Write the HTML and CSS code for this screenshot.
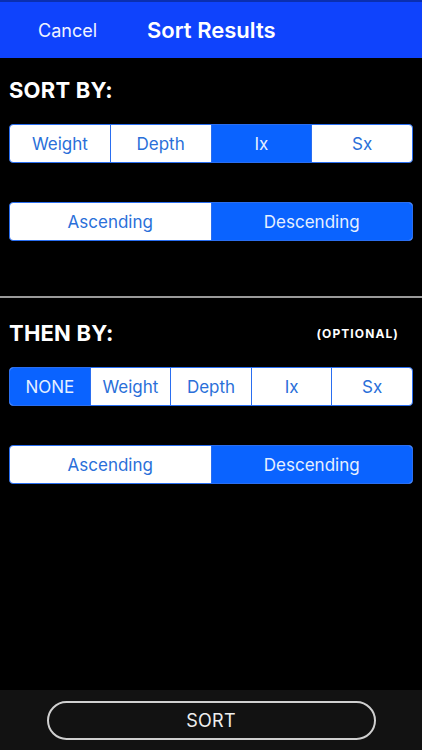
FILE: index.html
```html
<!DOCTYPE html>
<html>
<head>
<meta charset="utf-8">
<link rel="stylesheet" href="styles.css">
</head>
<body>
<div class="app">
  <header class="nav">
    <span class="cancel">Cancel</span>
    <span class="title">Sort Results</span>
  </header>
  <main class="content">
    <section class="block first">
      <h2 class="heading">SORT BY:</h2>
      <div class="seg seg-fields">
        <span class="opt">Weight</span>
        <span class="opt">Depth</span>
        <span class="opt on">Ix</span>
        <span class="opt">Sx</span>
      </div>
      <div class="seg seg-order">
        <span class="opt">Ascending</span>
        <span class="opt on">Descending</span>
      </div>
    </section>
    <hr class="rule">
    <section class="block second">
      <div class="heading-row">
        <h2 class="heading">THEN BY:</h2>
        <span class="optional">(OPTIONAL)</span>
      </div>
      <div class="seg seg-fields">
        <span class="opt on">NONE</span>
        <span class="opt">Weight</span>
        <span class="opt">Depth</span>
        <span class="opt">Ix</span>
        <span class="opt">Sx</span>
      </div>
      <div class="seg seg-order">
        <span class="opt">Ascending</span>
        <span class="opt on">Descending</span>
      </div>
    </section>
  </main>
  <footer class="footer">
    <button class="sort-btn">SORT</button>
  </footer>
</div>
</body>
</html>
```
FILE: styles.css
```css
* { box-sizing: border-box; }
html, body { margin: 0; padding: 0; background: #000; }
body { font-family: Inter, "Noto Sans", "Liberation Sans", sans-serif; }
.app { width: 422px; height: 750px; display: flex; flex-direction: column; }
.nav {
  height: 58px; background: #0f43fc; border-top: 2px solid #0a2fb0;
  display: flex; align-items: center; padding-left: 38px; gap: 50px; color: #fff;
}
.cancel { font-size: 18px; font-weight: 400; color: #f0f4ff; }
.title { font-size: 22px; font-weight: 600; }
.content { flex: 1; display: flex; flex-direction: column; }
.block { padding: 0 9px 0 9px; }
.block.first { padding-top: 19px; }
.heading { margin: 0; color: #fff; font-size: 22px; font-weight: 700; line-height: 26px; letter-spacing: 0.2px; }
.heading-row { display: flex; align-items: center; justify-content: space-between; padding-right: 14px; }
.optional { color: #fff; font-size: 12px; font-weight: 700; letter-spacing: 1.1px; }
.seg {
  display: flex; border: 1px solid #2a6ef0; border-radius: 4px; overflow: hidden;
  background: #fff; height: 39px;
}
.seg .opt {
  flex: 1; display: flex; align-items: center; justify-content: center;
  color: #2a6fd9; font-size: 17px; border-left: 1px solid #2a6ef0;
}
.seg .opt:first-child { border-left: none; }
.seg .opt.on { background: #0a63ff; color: #e6f0ff; }
.first .seg-fields { margin-top: 21px; }
.seg-order { margin-top: 39px; }
.rule { border: none; height: 2px; background: #9a9a9a; margin: 55px 0 0 0; }
.block.second { padding-top: 22px; }
.second .seg-fields { margin-top: 21px; }
.second .seg-order { margin-top: 39px; }
.footer { height: 60px; background: #121212; display: flex; justify-content: center; align-items: center; }
.sort-btn {
  width: 329px; height: 39px; border: 2px solid #d0d0d0; border-radius: 20px;
  background: transparent; color: #eee; font-family: inherit; font-size: 18px; letter-spacing: 0.3px;
}
```
